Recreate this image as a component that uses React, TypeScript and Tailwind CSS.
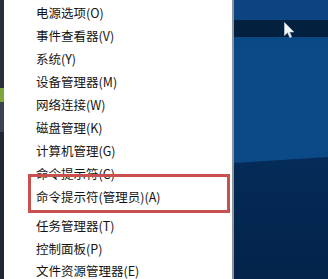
import { useMemo } from "react";

const topGroup = [
  "电源选项(O)",
  "事件查看器(V)",
  "系统(Y)",
  "设备管理器(M)",
  "网络连接(W)",
  "磁盘管理(K)",
  "计算机管理(G)",
  "命令提示符(C)",
  "命令提示符(管理员)(A)",
];

const bottomGroup = ["任务管理器(T)", "控制面板(P)", "文件资源管理器(E)"];

function MenuItem({ label, tight }: { label: string; tight?: boolean }) {
  return (
    <div
      className={
        tight
          ? "flex h-[22.5px] shrink-0 items-center pl-[32px] text-[12.5px] leading-none text-[#141414]"
          : "flex h-[23px] shrink-0 items-center pl-[32px] text-[12.5px] leading-none text-[#141414]"
      }
    >
      {label}
    </div>
  );
}

function Cursor() {
  return (
    <svg className="absolute left-[50px] top-[22px]" width="11" height="17" viewBox="0 0 11 17">
      <path d="M0.5 0.5 L0.5 13.5 L3.6 10.6 L5.8 15.6 L7.6 14.8 L5.5 10 L9.8 10 Z" fill="#f4f6fa" stroke="#cfd6e0" strokeWidth="0.6" />
    </svg>
  );
}

export default function App() {
  const font = useMemo(() => ({ fontFamily: '"Noto Sans CJK SC", "Noto Sans", sans-serif' }), []);

  return (
    <div className="relative flex h-[279px] w-[328px] overflow-hidden bg-white" style={font}>
      <div className="flex w-[4px] shrink-0 flex-col bg-[#2b3440]">
        <div className="h-[88px] bg-[#26313c]" />
        <div className="h-[14px] bg-[#7fa63a]" />
        <div className="h-[30px] bg-[#3a4450]" />
        <div className="flex-1 bg-[#1e2833]" />
      </div>

      <div className="flex w-[228px] shrink-0 flex-col overflow-hidden bg-white pt-[2px]">
        {topGroup.map((label) => (
          <MenuItem key={label} label={label} />
        ))}
        <div className="h-[6px] shrink-0" />
        {bottomGroup.map((label) => (
          <MenuItem key={label} label={label} tight />
        ))}
      </div>

      <div className="w-[2px] shrink-0 bg-[#8d939a]" />

      <div className="relative flex flex-1 flex-col bg-[#0a4582]">
        <div className="h-[20px] bg-[#0b4480]" />
        <div className="h-[17px] bg-[#04203f]" />
        <div className="h-[106px] bg-gradient-to-b from-[#0b4886] to-[#0b4a88]" />
        <div className="flex-1 bg-[#0b4987]">
          <div className="h-full w-full bg-gradient-to-b from-[#052c5a] to-[#03234a] [clip-path:polygon(0_20px,100%_14px,100%_100%,0_100%)]" />
        </div>
        <Cursor />
      </div>

      <div className="pointer-events-none absolute left-[28px] top-[174px] h-[39px] w-[202px] border-[3px] border-[#c8514f]" />
    </div>
  );
}
